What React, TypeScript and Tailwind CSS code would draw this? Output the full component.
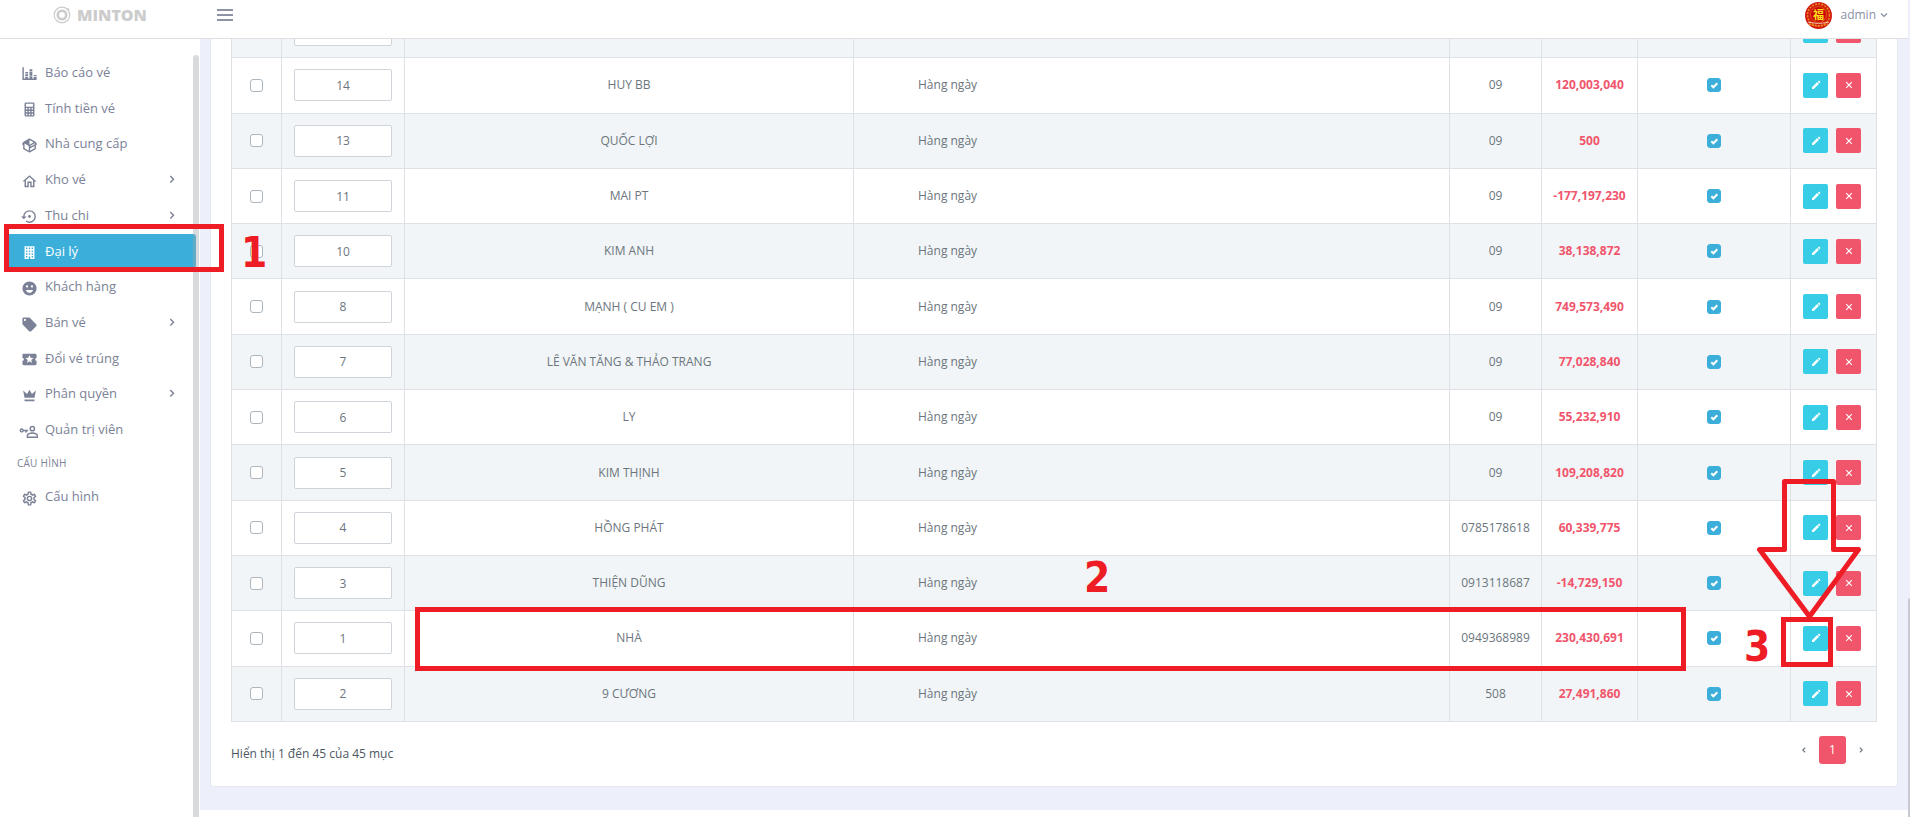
import React from "react";

const ICONS = {
  chart:
    "M22 21H2V3H4V19H6V17H10V19H12V16H16V19H18V17H22V21M18 14H22V16H18V14M12 6H16V9H12V6M16 15H12V10H16V15M6 10H10V12H6V10M10 16H6V13H10V16Z",
  calculator:
    "M7,2H17A2,2 0 0,1 19,4V20A2,2 0 0,1 17,22H7A2,2 0 0,1 5,20V4A2,2 0 0,1 7,2M7,4V8H17V4H7M7,10V12H9V10H7M11,10V12H13V10H11M15,10V12H17V10H15M7,14V16H9V14H7M11,14V16H13V14H11M15,14V16H17V14H15M7,18V20H9V18H7M11,18V20H13V18H11M15,18V20H17V18H15Z",
  box: "M2,10.96C1.5,10.68 1.35,10.07 1.63,9.59L3.13,7C3.24,6.8 3.41,6.66 3.6,6.58L11.43,2.18C11.59,2.06 11.79,2 12,2C12.21,2 12.41,2.06 12.57,2.18L20.47,6.62C20.66,6.72 20.82,6.88 20.91,7.08L22.36,9.6C22.64,10.08 22.47,10.69 22,10.96L21,11.54V16.5C21,16.88 20.79,17.21 20.47,17.38L12.57,21.82C12.41,21.94 12.21,22 12,22C11.79,22 11.59,21.94 11.43,21.82L3.53,17.38C3.21,17.21 3,16.88 3,16.5V10.96C2.7,11.13 2.32,11.14 2,10.96M12,4.15V4.15L12,10.85V10.85L17.96,7.5L12,4.15M5,15.91L11,19.29V12.58L5,9.21V15.91M19,15.91V12.69L14,15.59C13.67,15.77 13.3,15.76 13,15.6V19.29L19,15.91M13.85,13.36L20.13,9.73L19.55,8.72L13.27,12.35L13.85,13.36Z",
  home: "M12 5.69L17 10.19V18H15V12H9V18H7V10.19L12 5.69M12 3L2 12H5V20H11V14H13V20H19V12H22",
  restore:
    "M12,3A9,9 0 0,0 3,12H0L4,16L8,12H5A7,7 0 0,1 12,5A7,7 0 0,1 19,12A7,7 0 0,1 12,19C10.5,19 9.09,18.5 7.94,17.7L6.5,19.14C8.04,20.3 9.94,21 12,21A9,9 0 0,0 21,12A9,9 0 0,0 12,3M14,12A2,2 0 0,0 12,10A2,2 0 0,0 10,12A2,2 0 0,0 12,14A2,2 0 0,0 14,12Z",
  building:
    "M5,3V21H11V17.5H13V21H19V3H5M7,5H9V7H7V5M11,5H13V7H11V5M15,5H17V7H15V5M7,9H9V11H7V9M11,9H13V11H11V9M15,9H17V11H15V9M7,13H9V15H7V13M11,13H13V15H11V13M15,13H17V15H15V13M7,17H9V19H7V17M15,17H17V19H15V17Z",
  smile:
    "M12 2A10 10 0 1 0 12 22A10 10 0 1 0 12 2M8.5 7.5A1.6 1.6 0 1 1 8.5 10.7A1.6 1.6 0 1 1 8.5 7.5M15.5 7.5A1.6 1.6 0 1 1 15.5 10.7A1.6 1.6 0 1 1 15.5 7.5M7 14H17C16.3 16.4 14.4 18 12 18S7.7 16.4 7 14Z",
  tag: "M5.5,7A1.5,1.5 0 0,1 4,5.5A1.5,1.5 0 0,1 5.5,4A1.5,1.5 0 0,1 7,5.5A1.5,1.5 0 0,1 5.5,7M21.41,11.58L12.41,2.58C12.05,2.22 11.55,2 11,2H4C2.89,2 2,2.89 2,4V11C2,11.55 2.22,12.05 2.59,12.41L11.58,21.41C11.95,21.77 12.45,22 13,22C13.55,22 14.05,21.77 14.41,21.41L21.41,14.41C21.78,14.05 22,13.55 22,13C22,12.44 21.77,11.94 21.41,11.58Z",
  ticket:
    "M20 12c0-1.1.9-2 2-2V6c0-1.1-.9-2-2-2H4c-1.1 0-2 .9-2 2v4c1.1 0 2 .9 2 2s-.9 2-2 2v4c0 1.1.9 2 2 2h16c1.1 0 2-.9 2-2v-4c-1.1 0-2-.9-2-2zM15.6 16.8L12 14.5l-3.6 2.3 1.1-4.1-3.3-2.7 4.2-.3L12 5.8l1.6 3.9 4.2.3-3.3 2.7z",
  crown: "M5 15L3 5L8.5 10L12 4L15.5 10L21 5L19 15H5M5 17.5H19V20H5Z",
  admin:
    "M16 4A4 4 0 1 0 16 12A4 4 0 1 0 16 4M16 6A2 2 0 1 1 16 10A2 2 0 1 1 16 6M16 13C13 13 8 14.5 8 17.5V21H24V17.5C24 14.5 19 13 16 13M16 15C19 15 22 16.5 22 17.5V19H10V17.5C10 16.5 13 15 16 15M1 7.500A3 3 0 1 0 3.800 11.500H6V13.500H8.500V11.500H10V9.500H3.800A3 3 0 0 0 1 7.500M1 9.500A1 1 0 1 1 1 11.500A1 1 0 1 1 1 9.500Z",
  cog: "M12,8A4,4 0 0,1 16,12A4,4 0 0,1 12,16A4,4 0 0,1 8,12A4,4 0 0,1 12,8M12,10A2,2 0 0,0 10,12A2,2 0 0,0 12,14A2,2 0 0,0 14,12A2,2 0 0,0 12,10M10,22C9.75,22 9.54,21.82 9.5,21.58L9.13,18.93C8.5,18.68 7.96,18.34 7.44,17.94L4.95,18.95C4.73,19.03 4.46,18.95 4.34,18.73L2.34,15.27C2.21,15.05 2.27,14.78 2.46,14.63L4.57,12.97L4.5,12L4.57,11L2.46,9.37C2.27,9.22 2.21,8.95 2.34,8.73L4.34,5.27C4.46,5.05 4.73,4.96 4.95,5.05L7.44,6.05C7.96,5.66 8.5,5.32 9.13,5.07L9.5,2.42C9.54,2.18 9.75,2 10,2H14C14.25,2 14.46,2.18 14.5,2.42L14.87,5.07C15.5,5.32 16.04,5.66 16.56,6.05L19.05,5.05C19.27,4.96 19.54,5.05 19.66,5.27L21.66,8.73C21.79,8.95 21.73,9.22 21.54,9.37L19.43,11L19.5,12L19.43,13L21.54,14.63C21.73,14.78 21.79,15.05 21.66,15.27L19.66,18.73C19.54,18.95 19.27,19.04 19.05,18.95L16.56,17.95C16.04,18.34 15.5,18.68 14.87,18.93L14.5,21.58C14.46,21.82 14.25,22 14,22H10M11.25,4L10.88,6.61C9.68,6.86 8.62,7.5 7.85,8.39L5.44,7.35L4.69,8.65L6.8,10.2C6.4,11.37 6.4,12.64 6.8,13.8L4.68,15.36L5.43,16.66L7.86,15.62C8.63,16.5 9.68,17.14 10.87,17.38L11.24,20H12.76L13.13,17.39C14.32,17.14 15.37,16.5 16.14,15.62L18.57,16.66L19.32,15.36L17.2,13.81C17.6,12.64 17.6,11.37 17.2,10.2L19.31,8.65L18.56,7.35L16.15,8.39C15.38,7.5 14.32,6.86 13.12,6.62L12.75,4H11.25Z",
};

type IconName = keyof typeof ICONS;

function Icon({ name }: { name: IconName }) {
  return (
    <svg viewBox="0 0 24 24" className="mt-1 size-[17px] shrink-0 overflow-visible" fill="currentColor" fillRule="evenodd" aria-hidden="true">
      <path d={ICONS[name]} />
    </svg>
  );
}

interface MenuItem {
  label: string;
  icon: IconName;
  sub?: boolean;
  active?: boolean;
}

const MENU: MenuItem[] = [
  { label: "Báo cáo vé", icon: "chart" },
  { label: "Tính tiền vé", icon: "calculator" },
  { label: "Nhà cung cấp", icon: "box" },
  { label: "Kho vé", icon: "home", sub: true },
  { label: "Thu chi", icon: "restore", sub: true },
  { label: "Đại lý", icon: "building", active: true },
  { label: "Khách hàng", icon: "smile" },
  { label: "Bán vé", icon: "tag", sub: true },
  { label: "Đổi vé trúng", icon: "ticket" },
  { label: "Phân quyền", icon: "crown", sub: true },
  { label: "Quản trị viên", icon: "admin" },
];

interface Agent {
  order: string;
  name: string;
  phone: string;
  balance: string;
}

const AGENTS: Agent[] = [
  { order: "", name: "", phone: "", balance: "" },
  { order: "14", name: "HUY BB", phone: "09", balance: "120,003,040" },
  { order: "13", name: "QUỐC LỢI", phone: "09", balance: "500" },
  { order: "11", name: "MAI PT", phone: "09", balance: "-177,197,230" },
  { order: "10", name: "KIM ANH", phone: "09", balance: "38,138,872" },
  { order: "8", name: "MẠNH ( CU EM )", phone: "09", balance: "749,573,490" },
  { order: "7", name: "LÊ VĂN TĂNG & THẢO TRANG", phone: "09", balance: "77,028,840" },
  { order: "6", name: "LY", phone: "09", balance: "55,232,910" },
  { order: "5", name: "KIM THỊNH", phone: "09", balance: "109,208,820" },
  { order: "4", name: "HỒNG PHÁT", phone: "0785178618", balance: "60,339,775" },
  { order: "3", name: "THIỆN DŨNG", phone: "0913118687", balance: "-14,729,150" },
  { order: "1", name: "NHÀ", phone: "0949368989", balance: "230,430,691" },
  { order: "2", name: "9 CƯƠNG", phone: "508", balance: "27,491,860" },
];

function Chevron({ className, d }: { className: string; d: string }) {
  return (
    <svg viewBox="0 0 8 8" className={className} fill="none" stroke="currentColor" strokeWidth="1.4" aria-hidden="true">
      <path d={d} />
    </svg>
  );
}

function MenuLink({ item }: { item: MenuItem }) {
  return (
    <a
      href="#"
      aria-current={item.active ? "page" : undefined}
      className={
        item.active
          ? "ml-[9px] mr-1 flex h-[34px] items-center gap-[7px] rounded-r-[3px] bg-[#3bafda] pl-3 text-[13px] leading-5 font-medium text-white"
          : "ml-[9px] mr-1 flex h-[34px] items-center gap-[7px] pl-3 text-[13px] leading-5 text-[#7b8196]"
      }
    >
      <Icon name={item.icon} />
      <span className="flex-1">{item.label}</span>
      {item.sub && <Chevron className="mr-5 size-2" d="M2.3 1L5.5 4.2L2.3 7.4" />}
    </a>
  );
}

function Header() {
  return (
    <header className="flex h-[39px] shrink-0 items-center border-b border-[#dee0e3] bg-white pb-2">
      <a href="#" className="flex w-[200px] items-center justify-center gap-1.5 text-[#cccccc]">
        <svg viewBox="0 0 18 18" className="size-[18px]" fill="none" stroke="currentColor" aria-hidden="true">
          <circle cx="9" cy="9" r="7.8" strokeWidth="1.2" />
          <circle cx="9" cy="9" r="4.2" strokeWidth="2.6" />
          <circle cx="15" cy="3.5" r="1.3" fill="currentColor" stroke="none" />
        </svg>
        <span className="text-base leading-5 font-extrabold">MINTON</span>
      </a>
      <button type="button" aria-label="Menu" className="ml-[17px] flex w-4 flex-col gap-[3px]">
        <span className="h-0.5 w-full bg-[#8d92a4]" />
        <span className="h-0.5 w-full bg-[#8d92a4]" />
        <span className="h-0.5 w-full bg-[#8d92a4]" />
      </button>
      <button type="button" className="ml-auto mr-5 flex items-center gap-2 text-xs text-[#8a90a3]">
        <svg viewBox="0 0 27 27" className="size-[27px]" aria-hidden="true">
          <circle cx="13.5" cy="13.5" r="13.5" fill="#d3190f" />
          <circle cx="13.5" cy="13" r="11" fill="none" stroke="#e8891c" strokeWidth="1.6" strokeDasharray="2 1.2" />
          <circle cx="13.5" cy="12.5" r="8" fill="#c90808" stroke="#e66b14" strokeWidth="0.8" />
          <text x="13.5" y="16.5" textAnchor="middle" fontSize="11" fontWeight="700" fill="#ffe11a" fontFamily="Noto Sans CJK SC, sans-serif">
            福
          </text>
          <path d="M3 20.2Q13.5 23 24 20.200" fill="none" stroke="#f3d9c8" strokeWidth="0.8" />
          <path d="M4 22Q13.5 25.5 23 22" fill="none" stroke="#e8891c" strokeWidth="1.6" strokeDasharray="2 1" />
        </svg>
        <span>admin</span>
        <Chevron className="-ml-1 size-2" d="M1 2.6L4 5.4L7 2.6" />
      </button>
    </header>
  );
}

function Sidebar() {
  return (
    <aside className="relative w-[200px] shrink-0 bg-white pt-[15px]">
      <ul className="flex h-[393px] flex-col">
        {MENU.map((item) => (
          <li key={item.label} className="flex flex-1 flex-col justify-center">
            <MenuLink item={item} />
          </li>
        ))}
      </ul>
      <h2 className="h-8 pl-[17px] text-[10px] leading-8 font-medium tracking-wide text-[#7b8196]">CẤU HÌNH</h2>
      <MenuLink item={{ label: "Cấu hình", icon: "cog" }} />
      <div className="absolute top-4 right-px bottom-0 w-1.5 rounded-t-full bg-[#9ea5ab]/40" />
    </aside>
  );
}

function AgentRow({ agent }: { agent: Agent }) {
  const cell = "border border-[#dee2e6] p-0 text-center align-middle";
  return (
    <tr className="odd:bg-[#f1f5f7] even:bg-white">
      <td className={cell}>
        <input
          type="checkbox"
          aria-label={`Chọn ${agent.name}`}
          className="mx-auto block size-[13px] appearance-none rounded-[3px] border border-[#adb5bd] bg-white"
        />
      </td>
      <td className={cell}>
        <input
          type="text"
          defaultValue={agent.order}
          aria-label={`Thứ tự ${agent.name}`}
          className="mx-auto block h-8 w-[98px] rounded-[2px] border border-[#ced4da] bg-white text-center text-xs text-[#6c757d]"
        />
      </td>
      <td className={cell}>{agent.name}</td>
      <td className="border border-[#dee2e6] p-0 pl-16 text-left align-middle">{agent.name && "Hàng ngày"}</td>
      <td className={cell}>{agent.phone}</td>
      <td className="border border-[#dee2e6] p-0 text-center align-middle font-bold text-[#f1556c]">{agent.balance}</td>
      <td className={cell}>
        <label className="relative mx-auto block size-3.5">
          <input
            type="checkbox"
            defaultChecked
            aria-label={`Kích hoạt ${agent.name}`}
            className="block size-3.5 appearance-none rounded-[3px] border border-[#adb5bd] bg-white checked:border-[#3bafda] checked:bg-[#3bafda]"
          />
          <svg viewBox="0 0 14 14" className="pointer-events-none absolute inset-0 size-3.5" fill="none" stroke="#ffffff" strokeWidth="2" aria-hidden="true">
            <path d="M4.3 7.3L6.4 9.3L10.3 5.2" />
          </svg>
        </label>
      </td>
      <td className={cell}>
        <div className="flex gap-2 pl-3">
          <button type="button" aria-label="Sửa" className="flex size-[25px] items-center justify-center rounded-[2px] bg-[#37cde6]">
            <svg viewBox="0 0 10 10" className="size-2.5" fill="#ffffff" aria-hidden="true">
              <path d="M1 7.2L6.200 2L8 3.800L2.8 9H1ZM6.800 1.500L7.500.8Q8 .5 8.4 .8L9.200 1.600Q9.500 2 9.200 2.500L8.500 3.200Z" />
            </svg>
          </button>
          <button type="button" aria-label="Xóa" className="flex size-[25px] items-center justify-center rounded-[2px] bg-[#f1556c]">
            <svg viewBox="0 0 10 10" className="size-2.5" fill="none" stroke="#ffffff" strokeWidth="1.2" aria-hidden="true">
              <path d="M2.2 2.2L7.8 7.8M7.8 2.2L2.2 7.8" />
            </svg>
          </button>
        </div>
      </td>
    </tr>
  );
}

function Annotations() {
  const digit = "absolute text-[42px] leading-none font-bold font-['DejaVu_Sans_Condensed','DejaVu_Sans',sans-serif]";
  return (
    <div className="pointer-events-none absolute inset-0 overflow-hidden text-[#ee1c24]">
      <div className="absolute top-[224px] left-1 h-12 w-[220px] border-5 border-[#ee1c24]" />
      <div className="absolute top-[607px] left-[415px] h-16 w-[1271px] border-5 border-[#ee1c24]" />
      <div className="absolute top-[617px] left-[1781px] h-[50px] w-[52px] border-5 border-[#ee1c24]" />
      <svg viewBox="0 0 106 142" className="absolute top-[477px] left-[1756px] h-[142px] w-[106px]" fill="none" stroke="currentColor" strokeWidth="5" strokeLinejoin="round" aria-hidden="true">
        <path d="M28.5 4.5H77.5V72.5H102.5L53.5 139.5L3.5 72.5H28.5Z" />
      </svg>
      <span className={`${digit} top-[232px] left-[241px]`}>1</span>
      <span className={`${digit} top-[557px] left-[1084px]`}>2</span>
      <span className={`${digit} top-[626px] left-[1744px]`}>3</span>
    </div>
  );
}

export default function App() {
  return (
    <div className="relative flex h-screen overflow-hidden bg-[#edf0fa] font-['Open_Sans','Noto_Sans',sans-serif]">
      <div className="flex min-w-0 flex-1 flex-col">
        <Header />
        <div className="flex min-h-0 flex-1">
          <Sidebar />
          <div className="flex min-w-0 flex-1 flex-col">
            <main className="flex min-h-0 flex-1 flex-col justify-end overflow-hidden pr-2.5 pb-[23px] pl-[10px]">
              <section className="rounded-b-[3px] border border-t-0 border-[#e5e8ee] bg-white px-5">
                <table className="h-[720px] w-full table-fixed border-collapse text-xs text-[#6c757d]">
                  <colgroup>
                    <col className="w-[50px]" />
                    <col className="w-[123px]" />
                    <col className="w-[449px]" />
                    <col />
                    <col className="w-[92px]" />
                    <col className="w-[96px]" />
                    <col className="w-[153px]" />
                    <col className="w-[86px]" />
                  </colgroup>
                  <tbody>
                    {AGENTS.map((agent, i) => (
                      <AgentRow key={i} agent={agent} />
                    ))}
                  </tbody>
                </table>
                <div className="flex h-16 items-center justify-between">
                  <p className="text-xs text-[#4c5862]">Hiển thị 1 đến 45 của 45 mục</p>
                  <nav aria-label="Phân trang" className="mr-px mb-2 flex items-center text-xs text-[#6c757d]">
                    <button type="button" aria-label="Trang trước" className="px-3">
                      <Chevron className="size-1.5" d="M5.5 1L2.3 4L5.5 7" />
                    </button>
                    <button type="button" aria-current="page" className="h-7 w-[27px] rounded-[3px] bg-[#f1556c] text-white">
                      1
                    </button>
                    <button type="button" aria-label="Trang sau" className="px-3">
                      <Chevron className="size-1.5" d="M2.5 1L5.7 4L2.5 7" />
                    </button>
                  </nav>
                </div>
              </section>
            </main>
            <footer className="h-[7px] shrink-0 bg-white" />
          </div>
        </div>
      </div>
      <div className="flex w-[2px] shrink-0 flex-col justify-end">
        <div className="h-[219px] rounded-tl-[2px] bg-[#c6c9d2]" />
      </div>
      <Annotations />
    </div>
  );
}
